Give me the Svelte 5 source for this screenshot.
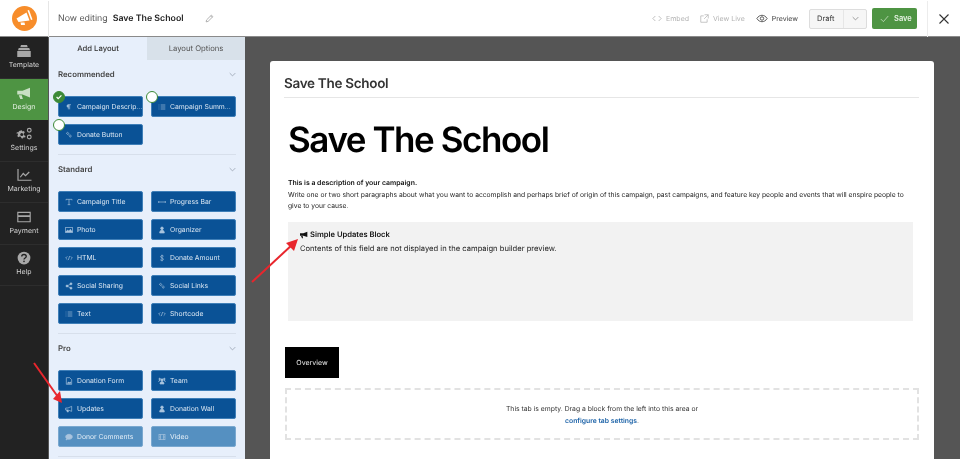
<script>
  const navItems = [
    { label: 'Template', icon: 'template' },
    { label: 'Design', icon: 'design', active: true },
    { label: 'Settings', icon: 'settings' },
    { label: 'Marketing', icon: 'marketing' },
    { label: 'Payment', icon: 'payment' },
    { label: 'Help', icon: 'help' }
  ]

  const groups = [
    {
      title: 'Recommended',
      blocks: [
        { label: 'Campaign Descrip...', icon: 'para', dot: 'done' },
        { label: 'Campaign Summ...', icon: 'list', dot: 'open' },
        { label: 'Donate Button', icon: 'link', dot: 'open' }
      ]
    },
    {
      title: 'Standard',
      blocks: [
        { label: 'Campaign Title', icon: 'title' },
        { label: 'Progress Bar', icon: 'bar' },
        { label: 'Photo', icon: 'photo' },
        { label: 'Organizer', icon: 'user' },
        { label: 'HTML', icon: 'code' },
        { label: 'Donate Amount', icon: 'dollar' },
        { label: 'Social Sharing', icon: 'share' },
        { label: 'Social Links', icon: 'link' },
        { label: 'Text', icon: 'list' },
        { label: 'Shortcode', icon: 'code' }
      ]
    },
    {
      title: 'Pro',
      blocks: [
        { label: 'Donation Form', icon: 'form' },
        { label: 'Team', icon: 'team' },
        { label: 'Updates', icon: 'horn' },
        { label: 'Donation Wall', icon: 'user' },
        { label: 'Donor Comments', icon: 'comment', faded: true },
        { label: 'Video', icon: 'video', faded: true }
      ]
    }
  ]
</script>

{#snippet blockIcon(name)}
  <svg class="bicon" viewBox="0 0 12 12" fill="none" stroke="currentColor" stroke-width="1">
    {#if name === 'para'}
      <path d="M5 2.500h4M5 2.500v7M7 2.500v7" /><path d="M5 2.500a2 2 0 0 0 0 4z" fill="currentColor" />
    {:else if name === 'list'}
      <path d="M4 3h7M4 6h7M4 9h7M1 3h1M1 6h1M1 9h1" />
    {:else if name === 'link'}
      <path d="M2 3.500l2-1.500 2 2-1.500 1.500zM6 7l1.500-1.500 2 2L8 9.500z" />
    {:else if name === 'title'}
      <path d="M1.500 2h9M6 2v8M4 10h4M1.500 2v1.500M10.500 2v1.500" />
    {:else if name === 'bar'}
      <path d="M1 6h10M1 4.500v3M11 4.500v3" />
    {:else if name === 'photo'}
      <rect x="1" y="2" width="10" height="8" /><path d="M1 9l3-3 2 2 2-3 3 4z" fill="currentColor" />
    {:else if name === 'user'}
      <circle cx="6" cy="3.500" r="2" fill="currentColor" /><path d="M2.500 10.500c0-6 7-6 7 0z" fill="currentColor" />
    {:else if name === 'code'}
      <path d="M3.500 3.500L1 6l2.500 2.500M8.500 3.500L11 6 8.500 8.500M7 3L5 9" />
    {:else if name === 'dollar'}
      <path d="M8.500 3.500C8 2 4 2 3.800 4c-.2 2.300 4.500 1.500 4.400 4-.1 2-4.400 2-5 .3M6 1v10" />
    {:else if name === 'share'}
      <circle cx="9" cy="2.800" r="1.500" fill="currentColor" /><circle cx="9" cy="9.200" r="1.500" fill="currentColor" /><circle cx="3" cy="6" r="1.500" fill="currentColor" /><path d="M9 2.800L3 6l6 3.200" />
    {:else if name === 'form'}
      <path d="M2 1h5l3 3v7H2z" /><path d="M3.500 9.500l2-2 1.500 1 1.500-1v2z" fill="currentColor" />
    {:else if name === 'team'}
      <circle cx="6" cy="4.500" r="1.700" fill="currentColor" /><circle cx="2.500" cy="3" r="1.200" fill="currentColor" /><circle cx="9.500" cy="3" r="1.200" fill="currentColor" /><path d="M3 10.500c0-5 6-5 6 0zM1 7c0-2 2-2.500 2.500-2M11 7c0-2-2-2.500-2.500-2" fill="currentColor" />
    {:else if name === 'horn'}
      <path d="M1 4.500h3.500L10 2v7.500L4.500 7.500H1z" /><path d="M2.500 7.500L3.500 10.500h1.500l-.5-3" fill="currentColor" />
    {:else if name === 'comment'}
      <path d="M6 2c3 0 5 1.500 5 3.700S9 9.500 6 9.500c-.8 0-1.400-.1-2-.3L1.500 10.500l.8-2.200C1.500 7.600 1 6.700 1 5.700 1 3.500 3 2 6 2z" fill="currentColor" />
    {:else if name === 'video'}
      <rect x="1.500" y="2" width="9" height="8" /><path d="M3.800 2v8M8.200 2v8M1.500 6h2.300M8.200 6h2.300" />
    {/if}
  </svg>
{/snippet}

{#snippet navIcon(name)}
  <svg class="nicon" viewBox="0 0 24 18" fill="currentColor">
    {#if name === 'template'}
      <path d="M8 1h8l1 3H7zM5 5h14l1 3H4zM3 9h18v8H3z" />
    {:else if name === 'design'}
      <path d="M3 6h7l10-4v13L10 11H3zM5 12h4l1.500 5H7z" />
    {:else if name === 'settings'}
      <path d="M9 4l1 1.500 2-.5 1 2-1.500 1.500.5 2 2 1-.5 2-2-.2-1 1.700-2-.5-.5-1.800-2-.5-1.500 1-1.500-1.500 1-1.700-.5-2L2 8.500l.5-2 2 .2 1-1.700z" />
      <circle cx="9" cy="9.500" r="2" fill="#222" />
      <circle cx="19" cy="4" r="2.500" fill="none" stroke="currentColor" stroke-width="1.500" />
      <circle cx="19" cy="13" r="2.500" fill="none" stroke="currentColor" stroke-width="1.500" />
    {:else if name === 'marketing'}
      <path d="M4 1v15h18M7 12l4-5 3 3 5-5" fill="none" stroke="currentColor" stroke-width="1.600" />
    {:else if name === 'payment'}
      <path d="M3 2h18v14H3zM4.500 3.500v3h15v-3zM4.500 9v5.500h15V9z" fill-rule="evenodd" />
    {:else if name === 'help'}
      <circle cx="12" cy="9" r="8.500" />
      <path d="M9 7c0-3.500 6-3.500 6 0 0 2-3 2-3 4" fill="none" stroke="#222" stroke-width="1.800" />
      <circle cx="12" cy="13.500" r="1.100" fill="#222" />
    {/if}
  </svg>
{/snippet}

<div class="app">
  <header class="topbar">
    <div class="logo">
      <svg viewBox="0 0 25 25" width="25" height="25">
        <circle cx="12.500" cy="12.500" r="12.500" fill="#f78d2b" />
        <path d="M4.500 12.500l10-6 3 8-11 1.500z" fill="#fff" />
        <path d="M15.500 4.500l1.500-.5 3.500 9.500-1.500.5z" fill="#fff" />
        <path d="M8.500 16.500h4l.5 2.500H9z" fill="#fff" />
      </svg>
    </div>
    <div class="editing">
      <span class="now">Now editing</span>
      <strong>Save The School</strong>
      <svg class="pencil" viewBox="0 0 12 12" fill="none" stroke="#9a9a9a" stroke-width="1">
        <path d="M1.500 10.500l.6-2.600L8.500 1.500l2 2-6.400 6.400zM7.500 2.500l2 2" />
      </svg>
    </div>
    <div class="actions">
      <span class="action muted">
        <svg viewBox="0 0 12 10" width="10" height="9" fill="none" stroke="currentColor"><path d="M4 2L1 5l3 3M8 2l3 3-3 3" /></svg>
        Embed
      </span>
      <span class="action muted">
        <svg viewBox="0 0 12 12" width="9" height="9" fill="none" stroke="currentColor"><path d="M9.500 7v4h-8.500V2.500h4M6 1h5v5M11 1L5.500 6.500" /></svg>
        View Live
      </span>
      <span class="action">
        <svg viewBox="0 0 14 10" width="12" height="9" fill="none" stroke="currentColor"><path d="M1 5c3-5 9-5 12 0-3 5-9 5-12 0z" /><circle cx="7" cy="5" r="2" /></svg>
        Preview
      </span>
      <div class="status">
        <span class="status-label">Draft</span>
        <span class="status-caret">
          <svg viewBox="0 0 10 6" width="7" height="5" fill="none" stroke="#777"><path d="M1 1l4 4 4-4" /></svg>
        </span>
      </div>
      <button class="save">
        <svg viewBox="0 0 12 10" width="9" height="8" fill="none" stroke="#cfe5c9" stroke-width="1"><path d="M1 5l3.500 3.500L11 1" /></svg>
        Save
      </button>
    </div>
    <div class="close">
      <svg viewBox="0 0 10 10" width="10" height="10" fill="none" stroke="#333" stroke-width="1.100"><path d="M.5.500l9 9M9.500.500l-9 9" /></svg>
    </div>
  </header>

  <div class="body">
    <nav class="nav">
      {#each navItems as item}
        <div class="nav-item" class:active={item.active}>
          {@render navIcon(item.icon)}
          <span>{item.label}</span>
        </div>
      {/each}
    </nav>

    <aside class="panel">
      <div class="tabs">
        <div class="tab current">Add Layout</div>
        <div class="tab">Layout Options</div>
      </div>
      {#each groups as group}
        <section class="group">
          <div class="group-head">
            <h3>{group.title}</h3>
            <svg viewBox="0 0 10 6" width="7" height="5" fill="none" stroke="#8c96a6"><path d="M1 1l4 4 4-4" /></svg>
          </div>
          <div class="blocks">
            {#each group.blocks as block}
              <div class="block" class:faded={block.faded}>
                {#if block.dot}
                  <span class="dot {block.dot}">
                    {#if block.dot === 'done'}
                      <svg viewBox="0 0 10 10" width="8" height="8" fill="none" stroke="#fff" stroke-width="1.500"><path d="M2 5l2 2 4-4" /></svg>
                    {/if}
                  </span>
                {/if}
                {@render blockIcon(block.icon)}
                <span class="block-label">{block.label}</span>
              </div>
            {/each}
          </div>
        </section>
      {/each}
    </aside>

    <main class="stage">
      <article class="card">
        <h2>Save The School</h2>
        <h1>Save The School</h1>
        <div class="desc">
          <strong>This is a description of your campaign.</strong>
          <p>Write one or two short paragraphs about what you want to accomplish and perhaps brief of origin of this campaign, past campaigns, and feature key people and events that will enspire people to give to your cause.</p>
        </div>
        <div class="updates">
          <div class="updates-title">
            <svg viewBox="0 0 12 12" width="8" height="8" fill="#111"><path d="M0 3.500h5L11 1v8L5 7H0zM1.500 7.500L3 11h1.500L4 7.500z" /></svg>
            Simple Updates Block
          </div>
          <div>Contents of this field are not displayed in the campaign builder preview.</div>
        </div>
        <div class="tab-btn">Overview</div>
        <div class="dropzone">
          <span>This tab is empty. Drag a block from the left into this area or</span>
          <span><a href="#settings">configure tab settings</a>.</span>
        </div>
      </article>
    </main>
  </div>

  <svg class="arrows" viewBox="0 0 960 459" width="960" height="459">
    <path d="M252 282L293 244" stroke="#e8262d" stroke-width="2" />
    <path d="M298 239L286 243L294 251z" fill="#e8262d" />
    <path d="M34 363L58 397" stroke="#e8262d" stroke-width="2" />
    <path d="M62 403L53 399L60 391z" fill="#e8262d" />
  </svg>
</div>

<style>
  :global(body) {
    margin: 0;
    font-family: Inter, "Liberation Sans", sans-serif;
    text-rendering: geometricPrecision;
  }
  .app {
    position: relative;
    width: 960px;
    height: 459px;
    overflow: hidden;
    display: flex;
    flex-direction: column;
    background: #555;
    filter: blur(0.3px);
  }
  .topbar {
    height: 37px;
    flex: none;
    display: flex;
    align-items: center;
    background: #fff;
    box-shadow: inset 0 -1px 0 #8a8a8a;
  }
  .logo {
    width: 49px;
    height: 36px;
    padding-left: 1px;
    box-sizing: border-box;
    display: flex;
    align-items: center;
    justify-content: center;
    border-right: 1px solid #e6e6e6;
  }
  .editing {
    display: flex;
    align-items: center;
    margin-left: 9px;
    font-size: 8.800px;
    color: #555;
  }
  .editing strong {
    margin-left: 5px;
    color: #222;
    font-weight: 600;
  }
  .pencil {
    width: 9px;
    height: 9px;
    margin-left: 21px;
  }
  .actions {
    margin-left: auto;
    display: flex;
    align-items: center;
    font-size: 7px;
  }
  .action {
    display: flex;
    align-items: center;
    gap: 4px;
    margin-right: 11px;
    color: #444;
  }
  .action.muted {
    color: #b4b4b4;
  }
  .status {
    display: flex;
    width: 58px;
    height: 20px;
    margin-left: 0;
    border: 1px solid #ddd;
    border-radius: 2px;
    background: #f6f6f6;
    box-sizing: border-box;
    color: #333;
    font-size: 7.500px;
  }
  .status-label {
    flex: 1;
    padding-left: 7px;
    line-height: 18px;
  }
  .status-caret {
    width: 22px;
    display: flex;
    align-items: center;
    justify-content: center;
    border-left: 1px solid #e6e6e6;
  }
  .save {
    display: flex;
    align-items: center;
    gap: 5px;
    width: 45px;
    height: 21px;
    margin-left: 5px;
    padding: 0 0 0 8px;
    border: 0;
    border-radius: 2px;
    background: #4e9443;
    color: #e8f3e5;
    font: 600 7.500px Inter, sans-serif;
  }
  .close {
    width: 33px;
    height: 36px;
    margin-left: 10px;
    display: flex;
    align-items: center;
    justify-content: center;
    border-left: 1px solid #ececec;
    box-sizing: border-box;
  }
  .body {
    flex: 1;
    display: flex;
    min-height: 0;
  }
  .nav {
    width: 48px;
    flex: none;
    background: #222;
    box-sizing: border-box;
  }
  .nav-item {
    height: 41.500px;
    padding-bottom: 2px;
    display: flex;
    flex-direction: column;
    align-items: center;
    justify-content: center;
    gap: 2px;
    box-sizing: border-box;
    border-bottom: 1px solid #2d2d2d;
    color: #a8a8a8;
    font-size: 7px;
  }
  .nav-item span {
    color: #d4d4d4;
  }
  .nav-item.active {
    background: #4e9443;
    color: #c9dfc4;
    border-bottom: 0;
  }
  .nav-item.active span {
    color: #e6f1e3;
  }
  .nicon {
    width: 18px;
    height: 14px;
  }
  .panel {
    width: 196px;
    flex: none;
    margin-left: 1px;
    background: #e7effb;
    overflow: hidden;
  }
  .tabs {
    display: flex;
    height: 23px;
    font-size: 7.700px;
  }
  .tab {
    flex: 1;
    display: flex;
    align-items: center;
    justify-content: center;
    background: #d8e1ea;
    color: #555;
  }
  .tab.current {
    background: #e7effb;
    color: #333;
    font-weight: 500;
  }
  .group {
    margin: 0 9px;
    padding-bottom: 9px;
    border-bottom: 1px solid #d7dfeb;
  }
  .group-head {
    height: 28px;
    margin-bottom: 8px;
    display: flex;
    align-items: center;
    justify-content: space-between;
  }
  h3 {
    margin: 0;
    font-size: 7.800px;
    font-weight: 600;
    color: #444;
  }
  .blocks {
    display: grid;
    grid-template-columns: 85px 85px;
    gap: 7px 8px;
  }
  .block {
    position: relative;
    height: 21px;
    display: flex;
    align-items: center;
    gap: 4px;
    padding-left: 6px;
    box-sizing: border-box;
    border: 1px solid #3f7fb8;
    border-radius: 2px;
    background: #0a5296;
    color: #dbe7f3;
    font-size: 6.800px;
    white-space: nowrap;
  }
  .block.faded {
    background: #5590c1;
    border-color: #79a8d0;
    color: #e4eef7;
  }
  .bicon {
    width: 8px;
    height: 8px;
    flex: none;
    color: #a9c4de;
  }
  .dot {
    position: absolute;
    left: -6px;
    top: -6px;
    width: 10px;
    height: 10px;
    border-radius: 50%;
    border: 1.500px solid #3d8a37;
    background: #fff;
    display: flex;
    align-items: center;
    justify-content: center;
  }
  .dot.done {
    background: #3d8a37;
  }
  .stage {
    flex: 1;
    min-width: 0;
    padding: 24px 26px 0 25px;
  }
  .card {
    height: 100%;
    padding: 16px 15px 0 14px;
    box-sizing: border-box;
    background: #fff;
    border-radius: 3px 3px 0 0;
    color: #111;
  }
  h2 {
    margin: 0;
    padding-bottom: 5px;
    border-bottom: 1px solid #e6e6e6;
    font-size: 13.500px;
    line-height: 15px;
    font-weight: 600;
    letter-spacing: -0.300px;
    color: #333;
  }
  h1 {
    margin: 20px 0 0 4px;
    font-size: 35px;
    line-height: 44px;
    font-weight: 600;
    letter-spacing: -1.450px;
    color: #000;
  }
  .desc {
    margin: 15px 0 0 4px;
    font-size: 6.900px;
    line-height: 11.700px;
  }
  .desc strong {
    font-weight: 600;
  }
  .desc p {
    margin: 0;
    max-width: 625px;
    font-size: 6.730px;
    color: #222;
  }
  .updates {
    height: 99px;
    width: 625px;
    margin: 10px 0 0 4px;
    padding: 6px 12px;
    box-sizing: border-box;
    background: #f2f2f2;
    font-size: 7.600px;
    line-height: 14px;
    color: #222;
  }
  .updates-title {
    display: flex;
    align-items: center;
    gap: 2px;
    font-weight: 600;
    color: #111;
  }
  .tab-btn {
    width: 54px;
    height: 31px;
    margin: 26px 0 0 1px;
    display: flex;
    align-items: center;
    justify-content: center;
    background: #000;
    color: #eee;
    font-size: 7px;
  }
  .dropzone {
    height: 52px;
    margin: 10px 0 0 1px;
    box-sizing: border-box;
    border: 2px dashed #e2e2e2;
    display: flex;
    flex-direction: column;
    align-items: center;
    justify-content: center;
    gap: 3px;
    font-size: 6.800px;
    line-height: 9px;
    color: #333;
  }
  .dropzone a {
    color: #1d63a8;
    font-weight: 600;
    text-decoration: none;
  }
  .arrows {
    position: absolute;
    inset: 0;
    pointer-events: none;
  }
</style>
